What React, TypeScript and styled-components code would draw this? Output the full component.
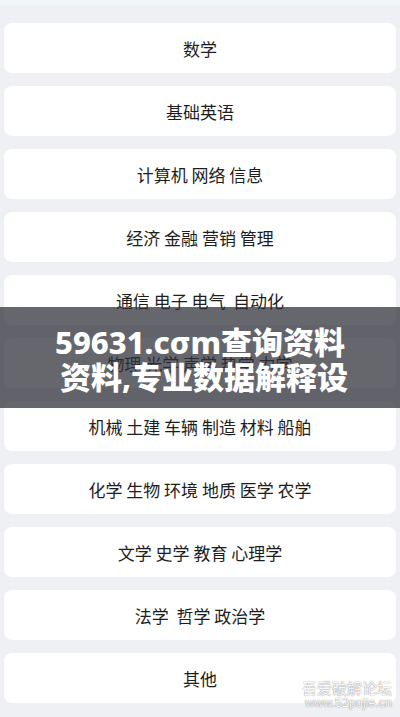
import React from "react";
import styled, { createGlobalStyle } from "styled-components";

const Global = createGlobalStyle`
  html, body { margin: 0; padding: 0; }
  body { background: #eef0f3; font-family: "Noto Sans", "Noto Sans CJK SC", sans-serif; }
`;

const Page = styled.div`
  position: relative;
  width: 400px;
  height: 717px;
  overflow: hidden;
  background: linear-gradient(#f0f6f7 0px, #f0f6f7 4px, #eef0f3 6px);
  padding: 23px 4px 0;
  box-sizing: border-box;
`;

const List = styled.div`
  display: flex;
  flex-direction: column;
  gap: 13px;
`;

const Card = styled.div`
  height: 50px;
  border-radius: 8px;
  background: #ffffff;
  display: flex;
  align-items: center;
  justify-content: center;
  font-family: "Noto Sans CJK SC", "Noto Sans", sans-serif;
  font-size: 17px;
  color: #1e1e1e;
  white-space: pre;
`;

const Band = styled.div`
  position: absolute;
  left: 0;
  right: 0;
  top: 307px;
  height: 101px;
  background: rgba(48, 50, 58, 0.74);
  display: flex;
  flex-direction: column;
  align-items: center;
  justify-content: center;
  padding-top: 4px;
  box-sizing: border-box;
`;

const BandLine = styled.div`
  font-family: "Noto Sans", "Noto Sans CJK SC", sans-serif;
  font-weight: 800;
  font-size: 31px;
  line-height: 35px;
  color: #ffffff;
  white-space: pre;
`;

const Watermark = styled.div`
  position: absolute;
  right: 8px;
  bottom: 7px;
  display: flex;
  flex-direction: column;
  align-items: flex-end;
  color: rgba(255, 255, 255, 0.95);
  text-shadow: 0 0 1px rgba(0, 0, 0, 0.45), 0 0 2px rgba(0, 0, 0, 0.2);
  font-family: "Noto Sans CJK SC", sans-serif;
`;

const WmTitle = styled.div`
  font-size: 15px;
  line-height: 17px;
`;

const WmUrl = styled.div`
  font-family: "Liberation Sans", sans-serif;
  font-size: 12.5px;
  line-height: 14px;
`;

const items = [
  "数学",
  "基础英语",
  "计算机 网络 信息",
  "经济 金融 营销 管理",
  "通信 电子 电气  自动化",
  "物理 光学 声学 热学 力学",
  "机械 土建 车辆 制造 材料 船舶",
  "化学 生物 环境 地质 医学 农学",
  "文学 史学 教育 心理学",
  "法学  哲学 政治学",
  "其他",
];

export default function App() {
  return (
    <>
      <Global />
      <Page>
        <List>
          {items.map((t) => (
            <Card key={t}>{t}</Card>
          ))}
        </List>
        <Band>
          <BandLine>59631.cσm查询资料</BandLine>
          <BandLine>{" 资料,专业数据解释设"}</BandLine>
        </Band>
        <Watermark>
          <WmTitle>吾爱破解论坛</WmTitle>
          <WmUrl>www.52pojie.cn</WmUrl>
        </Watermark>
      </Page>
    </>
  );
}
